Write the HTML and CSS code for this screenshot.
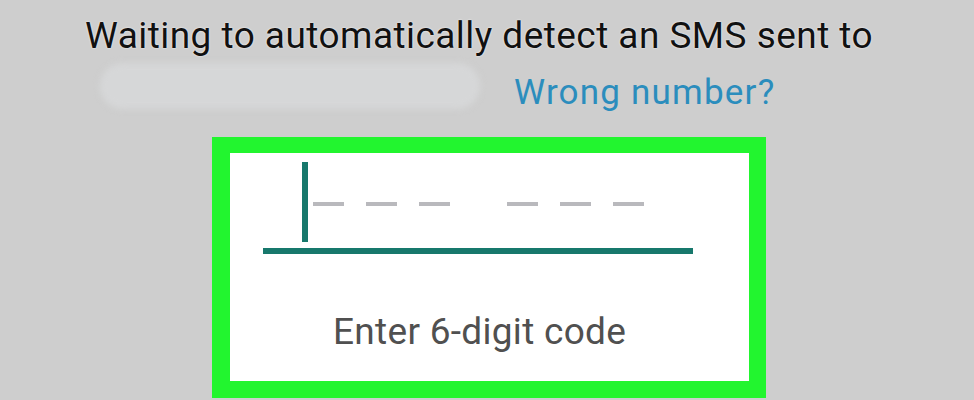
FILE: index.html
```html
<!DOCTYPE html>
<html lang="en">
<head>
<meta charset="utf-8">
<title>Verify phone number</title>
<link rel="stylesheet" href="styles.css">
</head>
<body>
<main class="screen">
  <p class="title">Waiting to automatically detect an SMS sent to</p>
  <div class="number-row">
    <span class="redacted"></span>
    <a class="wrong" href="#">Wrong number?</a>
  </div>
  <div class="frame">
    <div class="card">
      <div class="field">
        <span class="cursor"></span>
        <div class="dashes">
          <span class="dash"></span><span class="dash"></span><span class="dash"></span>
          <span class="group-gap"></span>
          <span class="dash"></span><span class="dash"></span><span class="dash"></span>
        </div>
      </div>
      <div class="underline"></div>
      <p class="hint">Enter 6-digit code</p>
    </div>
  </div>
</main>
</body>
</html>
```

FILE: styles.css
```css
* { box-sizing: border-box; }
html, body { margin: 0; padding: 0; }
body {
  width: 974px;
  height: 400px;
  overflow: hidden;
  background: #cecece;
  font-family: Roboto, "Noto Sans", sans-serif;
}
.screen {
  display: flex;
  flex-direction: column;
}
.title {
  margin: 0;
  padding: 14px 0 0 85px;
  font-size: 37px;
  line-height: 44px;
  letter-spacing: 0.45px;
  white-space: nowrap;
  color: #111;
  text-shadow: 0 0 2px #fff;
}
.number-row {
  display: flex;
  align-items: flex-start;
  height: 74px;
  margin-top: 5px;
}
.redacted {
  display: block;
  width: 380px;
  height: 46px;
  margin-left: 100px;
  border-radius: 23px;
  background: #d6d7d8;
  filter: blur(3px);
}
.wrong {
  margin: 10px 0 0 34px;
  font-size: 35px;
  line-height: 40px;
  letter-spacing: 1.2px;
  white-space: nowrap;
  color: #2b8dbd;
  text-decoration: none;
}
.frame {
  margin-left: 212px;
  width: 554px;
  height: 261px;
  border-style: solid;
  border-color: #22f52f;
  border-width: 16px 17px 17px 18px;
  background: #22f52f;
}
.card {
  height: 100%;
  background: #fff;
  display: flex;
  flex-direction: column;
}
.field {
  display: flex;
  align-items: flex-start;
  padding: 9px 0 0 72px;
  height: 89px;
}
.cursor {
  display: block;
  width: 6px;
  height: 80px;
  background: #17786c;
}
.dashes {
  display: flex;
  gap: 22px;
  margin: 40px 0 0 5px;
}
.dash {
  display: block;
  width: 31px;
  height: 4px;
  background: #b9b9bd;
}
.group-gap {
  display: block;
  width: 13px;
}
.underline {
  margin: 6px 0 0 33px;
  width: 430px;
  height: 6px;
  background: #17786c;
}
.hint {
  margin: 58px 0 0 0;
  padding-left: 103px;
  font-size: 37px;
  line-height: 40px;
  letter-spacing: 0.3px;
  white-space: nowrap;
  color: #505050;
}
```
